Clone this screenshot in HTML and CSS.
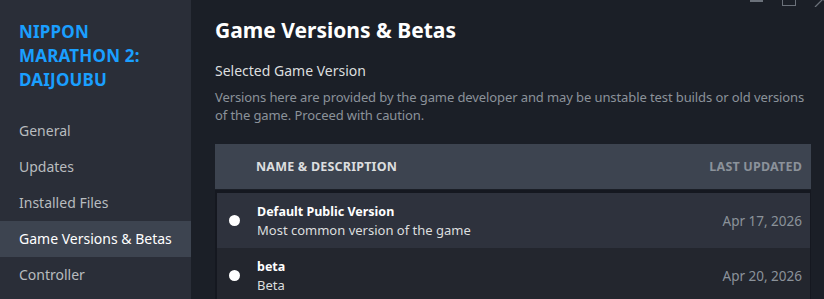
FILE: index.html
```html
<!DOCTYPE html>
<html>
<head>
<meta charset="utf-8">
<link rel="stylesheet" href="styles.css">
</head>
<body>
<div class="app">
  <aside class="sidebar">
    <div class="game-title">NIPPON MARATHON 2: DAIJOUBU</div>
    <nav class="menu">
      <div class="menu-item">General</div>
      <div class="menu-item">Updates</div>
      <div class="menu-item">Installed Files</div>
      <div class="menu-item active">Game Versions &amp; Betas</div>
      <div class="menu-item">Controller</div>
    </nav>
  </aside>
  <main class="content">
    <div class="win-controls">
      <span class="wc-min"></span>
      <span class="wc-max"></span>
      <svg class="wc-close" width="16" height="12" viewBox="0 0 16 12"><path d="M1 12 L9 4 M9 4 L17 12 M1 -4 L9 4" stroke="#6b717a" stroke-width="1.3" fill="none"/></svg>
    </div>
    <h1 class="page-title">Game Versions &amp; Betas</h1>
    <h2 class="section-title">Selected Game Version</h2>
    <p class="desc">Versions here are provided by the game developer and may be unstable test builds or old versions of the game. Proceed with caution.</p>
    <div class="table">
      <div class="thead">
        <span class="th-name">NAME &amp; DESCRIPTION</span>
        <span class="th-date">LAST UPDATED</span>
      </div>
      <div class="tbody">
        <div class="row sel">
          <span class="radio"></span>
          <div class="info">
            <div class="name">Default Public Version</div>
            <div class="sub">Most common version of the game</div>
          </div>
          <span class="date">Apr 17, 2026</span>
        </div>
        <div class="row">
          <span class="radio"></span>
          <div class="info">
            <div class="name">beta</div>
            <div class="sub">Beta</div>
          </div>
          <span class="date">Apr 20, 2026</span>
        </div>
      </div>
    </div>
  </main>
</div>
</body>
</html>
```
FILE: styles.css
```css
* { box-sizing: border-box; }
html, body { margin: 0; padding: 0; }
body {
  width: 824px;
  height: 299px;
  overflow: hidden;
  background: #1b1f27;
  font-family: "Noto Sans", "DejaVu Sans", sans-serif;
}
.app {
  display: flex;
  height: 299px;
}
.sidebar {
  width: 191px;
  flex: none;
  background: #2a2e38;
  padding-top: 20px;
}
.game-title {
  color: #1a9fff;
  font-weight: 700;
  font-size: 17px;
  line-height: 24px;
  padding: 0 40px 0 19px;
  letter-spacing: 0.2px;
}
.menu {
  margin-top: 21px;
}
.menu-item {
  height: 36px;
  line-height: 36px;
  padding-left: 19px;
  font-size: 14px;
  color: #b8bcbf;
}
.menu-item.active {
  background: #3d4450;
  color: #ffffff;
}
.content {
  flex: 1;
  position: relative;
  padding: 14px 13px 0 24px;
}
.win-controls {
  position: absolute;
  top: 0;
  right: 0;
  height: 8px;
  width: 80px;
}
.wc-min {
  position: absolute;
  left: 6px;
  top: 0;
  width: 13px;
  height: 2px;
  background: #6b717a;
}
.wc-max {
  position: absolute;
  left: 38px;
  top: -2px;
  width: 14px;
  height: 8px;
  border: 1px solid #6b717a;
}
.wc-close {
  position: absolute;
  left: 70px;
  top: -5px;
}
.page-title {
  margin: 0;
  color: #ffffff;
  font-size: 21px;
  font-weight: 700;
  line-height: 32px;
}
.section-title {
  margin: 15px 0 0;
  color: #dcdedf;
  font-size: 14px;
  font-weight: 400;
  line-height: 20px;
}
.desc {
  margin: 7px 0 0;
  color: #8b929a;
  font-size: 13px;
  line-height: 18px;
  letter-spacing: -0.1px;
}
.table {
  margin-top: 20px;
}
.thead {
  display: flex;
  justify-content: space-between;
  align-items: center;
  height: 45px;
  background: #3d4450;
  padding: 0 9px 0 41px;
  font-size: 12.5px;
  font-weight: 700;
  letter-spacing: 0.2px;
}
.th-name { color: #dcdedf; }
.th-date { color: #8b929a; }
.tbody {
  margin-top: 1px;
  border-top: 3px solid #151820;
  border-left: 2px solid #151820;
  border-right: 1px solid #151820;
}
.row {
  display: flex;
  align-items: center;
  height: 55px;
  padding: 0 8px 0 12px;
  background: #23262e;
}
.row.sel {
  background: #2e323d;
}
.radio {
  width: 11px;
  height: 11px;
  border-radius: 50%;
  background: #ffffff;
  flex: none;
}
.info {
  flex: 1;
  margin-left: 17px;
  padding-top: 2px;
}
.name {
  color: #ffffff;
  font-size: 12.5px;
  font-weight: 700;
  line-height: 18px;
}
.sub {
  color: #dcdedf;
  font-size: 13px;
  line-height: 19px;
}
.date {
  color: #8b929a;
  font-size: 13.5px;
}
```
